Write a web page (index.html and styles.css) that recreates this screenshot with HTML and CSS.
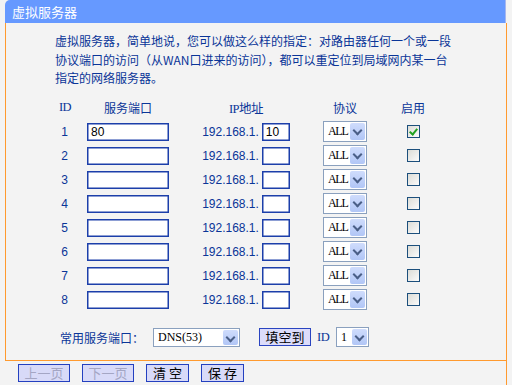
FILE: index.html
```html
<!DOCTYPE html>
<html>
<head>
<meta charset="utf-8">
<link rel="stylesheet" href="styles.css">
</head>
<body>
<div class="panel">
  <div class="title">虚拟服务器</div>
  <div class="main">
    <p class="intro">虚拟服务器，简单地说，您可以做这么样的指定：对路由器任何一个或一段<br>协议端口的访问（从WAN口进来的访问），都可以重定位到局域网内某一台<br>指定的网络服务器。</p>
    <div class="grid">
      <div class="hd id">ID</div><div class="hd">服务端口</div><div class="hd ipl">IP地址</div><div class="hd">协议</div><div class="hd">启用</div>

      <div class="num">1</div><div class="cell"><span class="inp port">80</span></div><div class="cell"><span class="ip">192.168.1.</span><span class="inp last">10</span></div><div class="cell"><span class="sel proto"><span class="val">ALL</span><span class="btn"></span></span></div><div class="cell"><span class="chk on"></span></div>

      <div class="num">2</div><div class="cell"><span class="inp port"></span></div><div class="cell"><span class="ip">192.168.1.</span><span class="inp last"></span></div><div class="cell"><span class="sel proto"><span class="val">ALL</span><span class="btn"></span></span></div><div class="cell"><span class="chk"></span></div>

      <div class="num">3</div><div class="cell"><span class="inp port"></span></div><div class="cell"><span class="ip">192.168.1.</span><span class="inp last"></span></div><div class="cell"><span class="sel proto"><span class="val">ALL</span><span class="btn"></span></span></div><div class="cell"><span class="chk"></span></div>

      <div class="num">4</div><div class="cell"><span class="inp port"></span></div><div class="cell"><span class="ip">192.168.1.</span><span class="inp last"></span></div><div class="cell"><span class="sel proto"><span class="val">ALL</span><span class="btn"></span></span></div><div class="cell"><span class="chk"></span></div>

      <div class="num">5</div><div class="cell"><span class="inp port"></span></div><div class="cell"><span class="ip">192.168.1.</span><span class="inp last"></span></div><div class="cell"><span class="sel proto"><span class="val">ALL</span><span class="btn"></span></span></div><div class="cell"><span class="chk"></span></div>

      <div class="num">6</div><div class="cell"><span class="inp port"></span></div><div class="cell"><span class="ip">192.168.1.</span><span class="inp last"></span></div><div class="cell"><span class="sel proto"><span class="val">ALL</span><span class="btn"></span></span></div><div class="cell"><span class="chk"></span></div>

      <div class="num">7</div><div class="cell"><span class="inp port"></span></div><div class="cell"><span class="ip">192.168.1.</span><span class="inp last"></span></div><div class="cell"><span class="sel proto"><span class="val">ALL</span><span class="btn"></span></span></div><div class="cell"><span class="chk"></span></div>

      <div class="num">8</div><div class="cell"><span class="inp port"></span></div><div class="cell"><span class="ip">192.168.1.</span><span class="inp last"></span></div><div class="cell"><span class="sel proto"><span class="val">ALL</span><span class="btn"></span></span></div><div class="cell"><span class="chk"></span></div>
    </div>
    <div class="common">
      <span class="clabel">常用服务端口：</span>
      <span class="sel dns"><span class="val">DNS(53)</span><span class="btn"></span></span>
      <span class="fill">填空到</span>
      <span class="idl">ID</span>
      <span class="sel idsel"><span class="val">1</span><span class="btn"></span></span>
    </div>
  </div>
  <div class="footer">
    <span class="fbtn wide dis">上一页</span>
    <span class="fbtn wide dis">下一页</span>
    <span class="fbtn">清 空</span>
    <span class="fbtn">保 存</span>
  </div>
</div>
</body>
</html>
```
FILE: styles.css
```css
html, body {
  margin: 0;
  padding: 0;
  background: #f3f3f3;
  font-family: "Noto Sans CJK SC", "Liberation Sans", sans-serif;
  font-size: 12px;
  color: #0a3598;
}
.panel {
  margin-left: 5px;
  width: 502px;
  height: 385px;
  display: flex;
  flex-direction: column;
}
.title {
  height: 23px;
  line-height: 23px;
  background: #6699ff;
  border-top-left-radius: 5px;
  border-right: 1px solid #a6b6ee;
  color: #fff;
  font-size: 13px;
  padding-left: 7px;
  box-sizing: border-box;
  width: 501px;
}
.main {
  height: 338px;
  box-sizing: border-box;
  border-left: 1px solid #ff9a2e;
  border-right: 1px solid #ff9a2e;
  border-bottom: 1px solid #ff9a2e;
  padding-top: 9px;
}
.intro {
  margin: 0 0 0 49px;
  line-height: 18.5px;
  white-space: nowrap;
}
.grid {
  margin: 8px 0 0 44px;
  display: grid;
  grid-template-columns: 30px 96px 140px 58px 78px;
  grid-auto-rows: 24px;
}
.grid > div {
  display: flex;
  align-items: center;
  justify-content: center;
}
.hd.id, .hd.ipl {
  font-family: "Liberation Serif", "Noto Sans CJK SC", serif;
  font-size: 12.5px;
  letter-spacing: -0.5px;
}
.num {
  font-family: "Liberation Sans", sans-serif;
  font-size: 12px;
  padding-right: 1px;
}
.inp {
  display: inline-block;
  box-sizing: border-box;
  height: 18px;
  background: #fff;
  border: 1px solid #1c3faa;
  box-shadow: inset 0 0 0 0.5px #1c3faa;
  color: #000;
  font-family: "Liberation Sans", sans-serif;
  font-size: 12px;
  line-height: 16px;
  padding-left: 3px;
}
.port { width: 82px; }
.last { width: 28px; margin-left: 3px; }
.ip {
  font-family: "Liberation Sans", sans-serif;
  font-size: 12px;
}
.sel {
  display: inline-flex;
  align-items: center;
  box-sizing: border-box;
  background: #fff;
  border: 1px solid #8aa0be;
  color: #000;
  font-family: "Liberation Serif", serif;
  font-size: 12px;
  letter-spacing: -1.3px;
  padding: 1px 1px 1px 4px;
}
.sel .val { flex: 1; }
.sel .btn {
  width: 15px;
  height: 100%;
  border-radius: 2px;
  background: linear-gradient(#cfdcfc, #b1c6f6);
  position: relative;
}
.sel .btn::after {
  content: "";
  position: absolute;
  left: 4px;
  top: 4px;
  width: 5px;
  height: 5px;
  border-right: 2px solid #4a5f87;
  border-bottom: 2px solid #4a5f87;
  transform: rotate(45deg);
}
.proto { width: 44px; height: 21px; }
.chk {
  display: inline-block;
  box-sizing: border-box;
  width: 13px;
  height: 13px;
  border: 1px solid #1c4f7c;
  background: linear-gradient(135deg, #dcdcd6, #fbfbfb);
  position: relative;
}
.chk.on::after {
  content: "";
  position: absolute;
  left: 3px;
  top: 1px;
  width: 3px;
  height: 6px;
  border-right: 2px solid #21a121;
  border-bottom: 2px solid #21a121;
  transform: rotate(40deg);
}
.common {
  margin: 16px 0 0 54px;
  display: flex;
  align-items: center;
  height: 19px;
}
.clabel { width: 93px; }
.dns { width: 87px; height: 19px; }
.dns .val { letter-spacing: 0; }
.fill {
  margin-left: 19px;
  box-sizing: border-box;
  width: 52px;
  height: 18px;
  line-height: 16px;
  text-align: center;
  background: #dcdcfa;
  border: 1px solid #2a44c0;
  color: #000;
  font-size: 13px;
}
.idl {
  margin-left: 6px;
  width: 19px;
  font-family: "Liberation Serif", serif;
  font-size: 12.5px;
  letter-spacing: -0.5px;
}
.idsel { width: 33px; height: 20px; }
.footer {
  flex: 1;
  border-right: 1px solid #ff9a2e;
  padding: 3px 0 0 13px;
  display: flex;
  gap: 12px;
  align-items: flex-start;
}
.fbtn {
  box-sizing: border-box;
  width: 43px;
  height: 18px;
  line-height: 16px;
  text-align: center;
  background: #d8daf8;
  border: 1px solid #2440c0;
  color: #000;
  font-size: 13px;
}
.fbtn.wide { width: 52px; }
.fbtn.dis { color: #a4a6c4; }
```
